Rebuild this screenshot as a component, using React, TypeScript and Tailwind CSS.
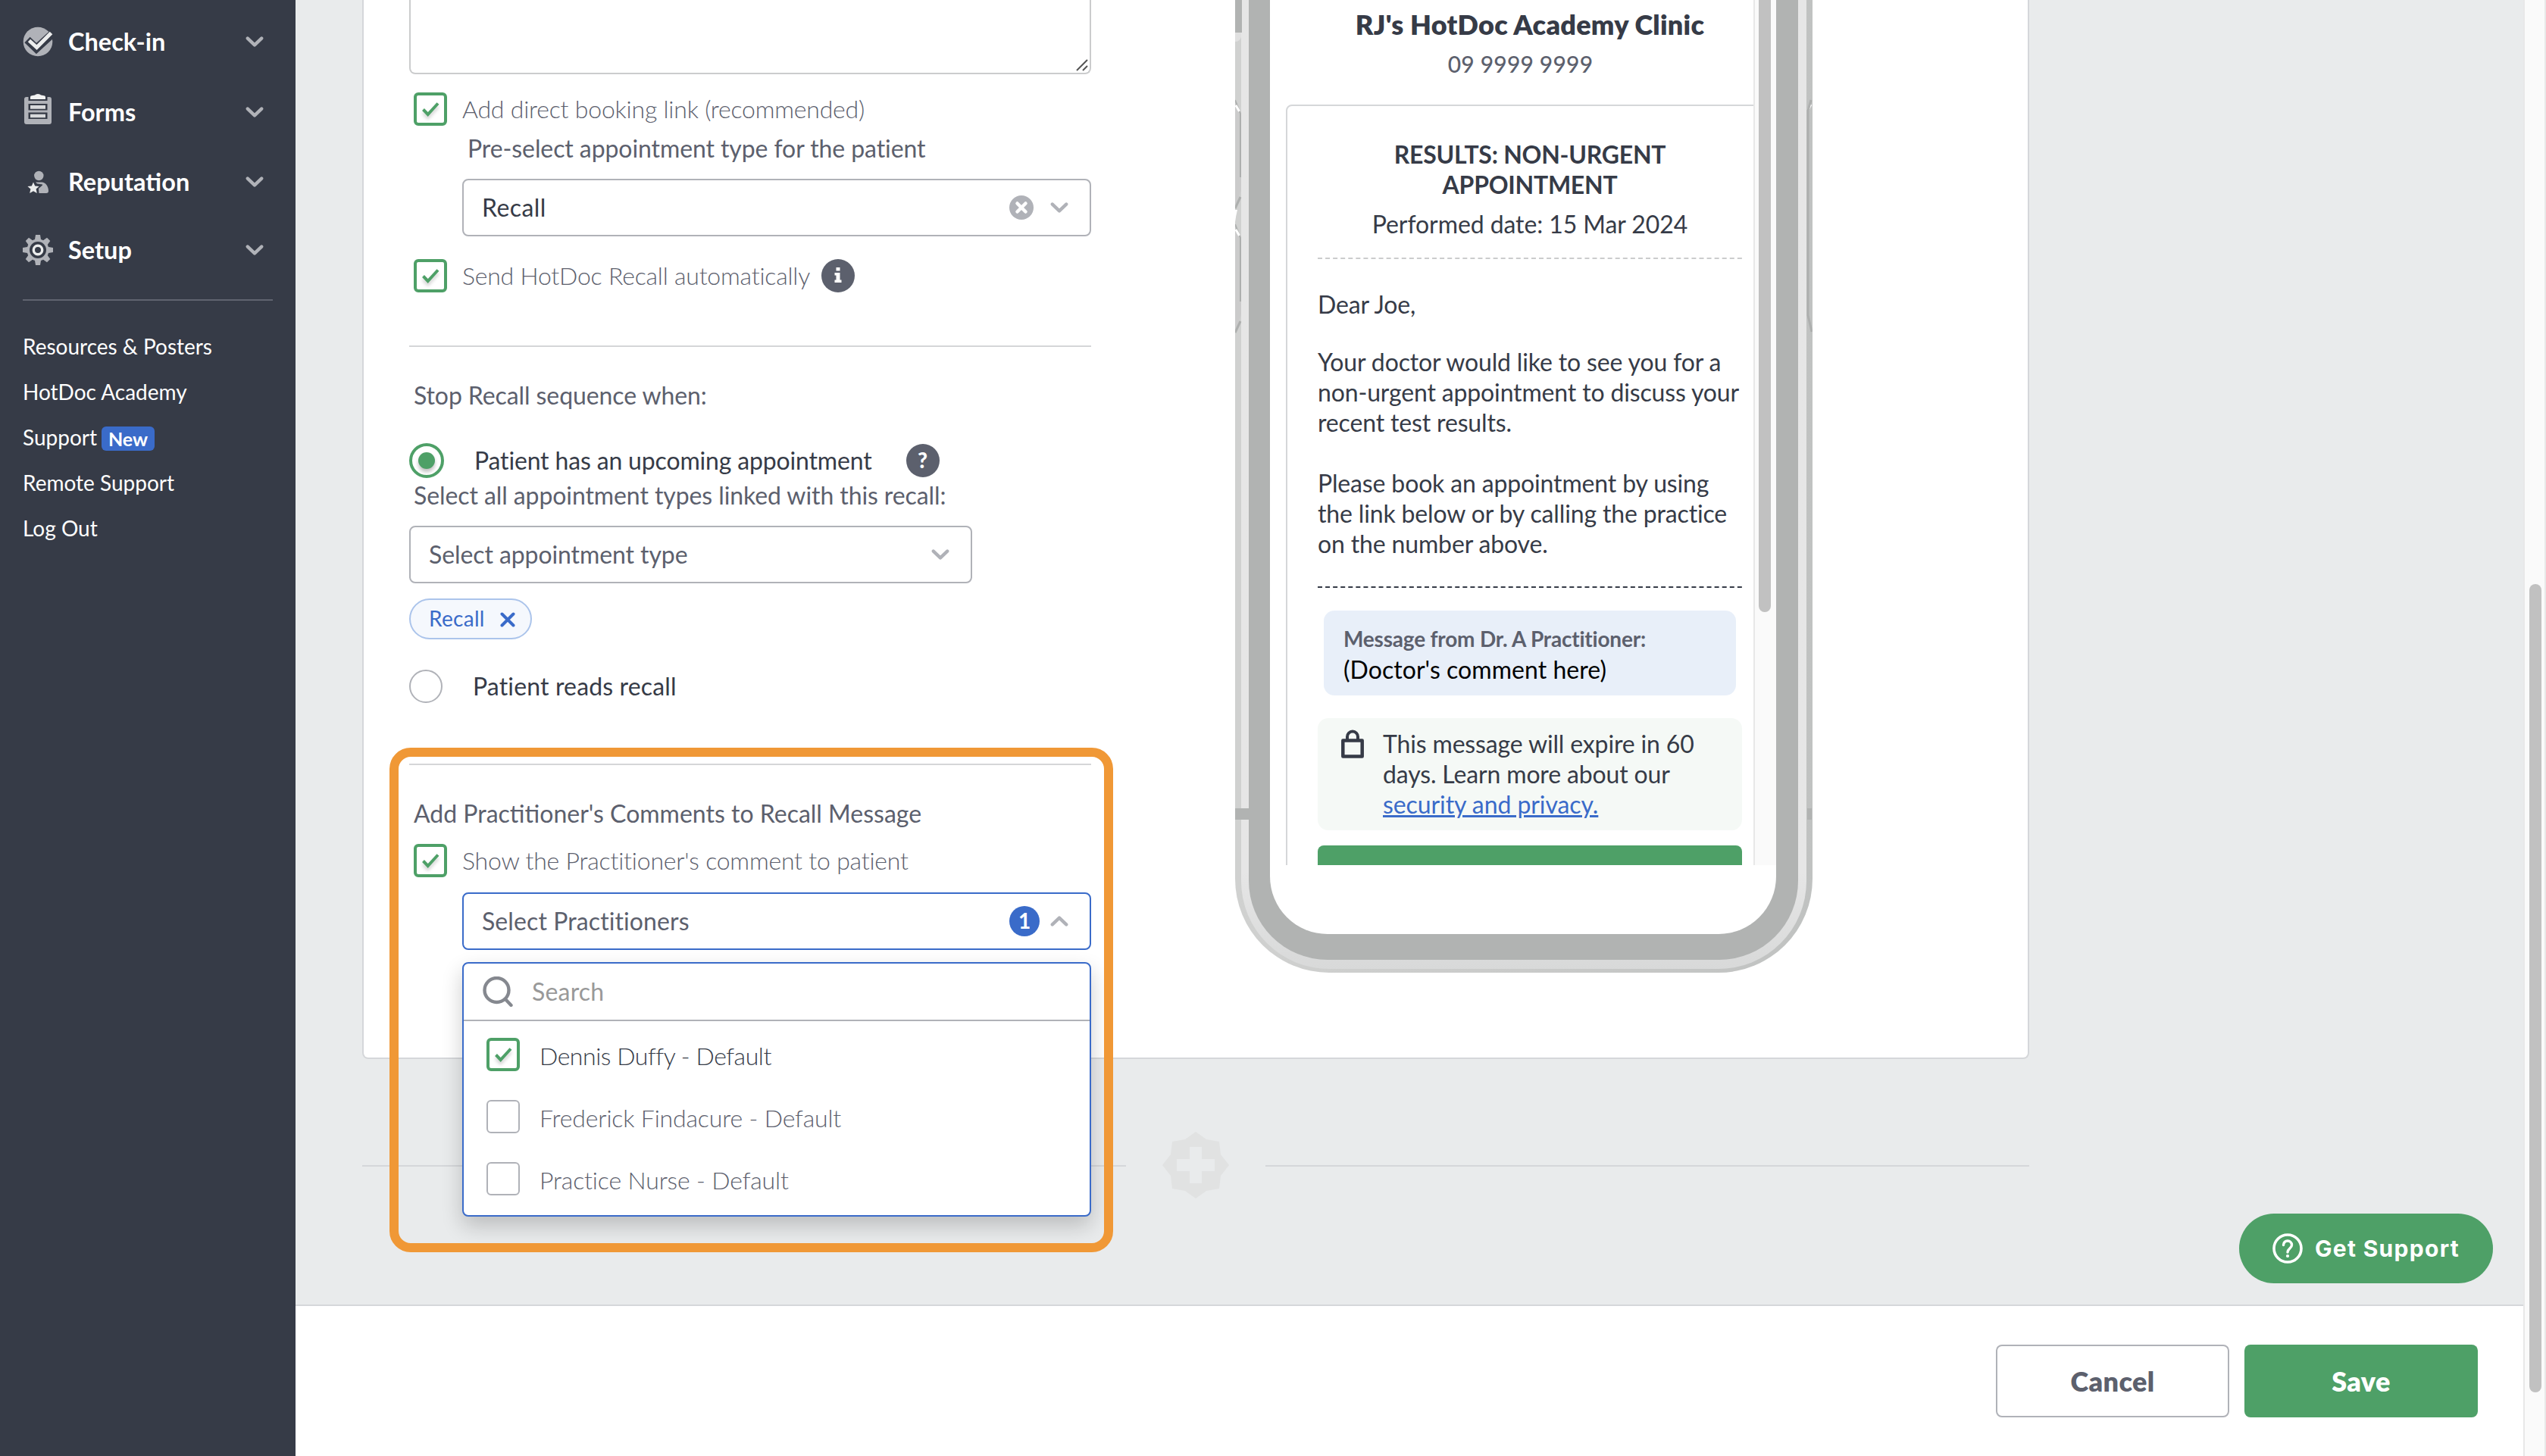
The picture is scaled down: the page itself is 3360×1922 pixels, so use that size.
import type { ReactNode } from "react";
import { clsx } from "clsx";

const links = ["Resources & Posters", "HotDoc Academy", "Support", "Remote Support", "Log Out"];

const practitioners = [
  { name: "Dennis Duffy - Default", checked: true },
  { name: "Frederick Findacure - Default", checked: false },
  { name: "Practice Nurse - Default", checked: false },
];

function Chevron({ up = false }: { up?: boolean }) {
  return (
    <svg viewBox="0 0 24 16" className={clsx("h-4 w-6 shrink-0", up && "rotate-180")}>
      <path d="M2.8 3.6 12 12.4l9.2-8.8" fill="none" stroke="#b0b2b8" strokeWidth="4.4" strokeLinecap="round" strokeLinejoin="round" />
    </svg>
  );
}

function CheckInIcon() {
  return (
    <svg viewBox="0 0 40 40" className="size-10">
      <circle cx="20" cy="20" r="19.3" fill="#b0b2b8" />
      <path d="M6 17.5 18 29 40 9" fill="none" stroke="#363b47" strokeWidth="10.5" />
      <path d="M8.5 18.5 18.5 27.500 37.500 8.500" fill="none" stroke="#eceded" strokeWidth="5" />
    </svg>
  );
}

function FormsIcon() {
  return (
    <svg viewBox="0 0 40 40" className="relative -top-1 size-10">
      <path d="M5 4h2.500v5h25V4H35q3 0 3 3v30q0 3-3 3H5q-3 0-3-3V7q0-3 3-3z" fill="#b0b2b8" />
      <path d="M7.500 13h25v8.500h-25zM7.500 24.500h25v8.500h-25z" fill="#363b47" />
      <path d="M10 15h20v4.800H10zM10 26.700h20v4.500H10z" fill="#d8d9db" />
      <path d="M10 7V4q0-1.500 2-1.800l4-.6Q17 0 20 0t4 1.600l4 .6q2 .3 2 1.800v3z" fill="#f2f2f2" />
    </svg>
  );
}

function ReputationIcon() {
  return (
    <svg viewBox="0 0 40 40" className="size-10">
      <circle cx="21.300" cy="12" r="6.200" fill="#b0b2b8" />
      <path d="M17 20.500h8c5 0 9 5.500 9 11.500 0 2-1 3-3 3H21.500l-.6-6 5.100-4.500v-1l-7-1z" fill="#b0b2b8" />
      <path d="m14 20.500 2.200 5 5.400.500-4 3.600 1.200 5.400-4.800-2.800L9.200 35l1.200-5.400-4-3.600 5.400-.5z" fill="#eceded" />
    </svg>
  );
}

function SetupIcon() {
  return (
    <svg viewBox="0 0 40 40" className="size-10">
      {[0, 45, 90, 135].map((angle) => (
        <path key={angle} d="M17 0h6l1 6v28l-1 6h-6l-1-6V6z" fill="#b0b2b8" transform={`rotate(${angle} 20 20)`} />
      ))}
      <circle cx="20" cy="20" r="14.500" fill="#b0b2b8" />
      <circle cx="20" cy="20" r="11" fill="#363b47" />
      <circle cx="20" cy="20" r="5.700" fill="none" stroke="#eceded" strokeWidth="3.400" />
    </svg>
  );
}

function NavItem({ label, icon, className }: { label: string; icon: ReactNode; className?: string }) {
  return (
    <div className={clsx("flex h-10 items-center", className)}>
      {icon}
      <span className="-mt-0.5 ml-5 flex-1 text-[32.500px] font-bold text-white">{label}</span>
      <Chevron />
    </div>
  );
}

function Sidebar() {
  return (
    <aside className="w-[390px] shrink-0 bg-[#363b47] px-[30px] pt-[35px]">
      <nav className="pr-3">
        <NavItem label="Check-in" icon={<CheckInIcon />} />
        <NavItem label="Forms" icon={<FormsIcon />} className="mt-[53px]" />
        <NavItem label="Reputation" icon={<ReputationIcon />} className="mt-[52px]" />
        <NavItem label="Setup" icon={<SetupIcon />} className="mt-[50px]" />
      </nav>
      <div className="mt-[45px] h-0.5 bg-[#60646f]" />
      <ul className="mt-[31px] text-[28px] text-white">
        {links.map((link) => (
          <li key={link} className="flex h-[60px] items-center">
            {link}
            {link === "Support" && (
              <span className="mt-0.5 ml-1.5 flex h-8 w-[70px] items-center justify-center rounded-md bg-[#3a6bc9] text-[25px] font-bold">New</span>
            )}
          </li>
        ))}
      </ul>
    </aside>
  );
}

function Checkbox({ checked = true }: { checked?: boolean }) {
  if (!checked) return <span className="size-11 shrink-0 rounded-md border-2 border-[#b0b2b8] bg-white" />;
  return (
    <span className="flex size-11 shrink-0 items-center justify-center rounded-md border-4 border-[#4ea067] bg-white">
      <svg viewBox="0 0 36 36" className="size-9 drop-shadow-[0_4px_2px_rgba(0,0,0,0.18)]">
        <path d="m8.500 18.500 6.200 6.500L28 10.500" fill="none" stroke="#4ea067" strokeWidth="4" />
      </svg>
    </span>
  );
}

function CheckRow({ label, className, children }: { label: string; className?: string; children?: ReactNode }) {
  return (
    <div className={clsx("ml-1.5 flex h-11 items-center", className)}>
      <Checkbox />
      <span className="ml-5 font-light tracking-[-0.21px] text-[#5c606d]">{label}</span>
      {children}
    </div>
  );
}

function RecallForm() {
  return (
    <div className="w-[900px] tracking-[-0.09px] text-[#5c606d]">
      <div className="flex h-[98px] items-end justify-end rounded-b-lg border-2 border-t-0 border-[#cbcccd]">
        <svg viewBox="0 0 16 16" className="m-0.5 size-4">
          <path d="M1 15 15 1M9 15l6-6" stroke="#555" strokeWidth="2" />
        </svg>
      </div>

      <CheckRow label="Add direct booking link (recommended)" className="mt-6" />
      <p className="mt-2.5 ml-[77px] h-10 leading-10">Pre-select appointment type for the patient</p>
      <div className="mt-5 ml-[70px] flex h-[76px] items-center rounded-lg border-2 border-[#b0b2b8] pr-7 pl-6 text-[#363b47]">
        <span className="flex-1 tracking-[0.4px]">Recall</span>
        <svg viewBox="0 0 32 32" className="mr-[22px] size-8">
          <circle cx="16" cy="16" r="16" fill="#b0b2b8" />
          <path d="m10.500 10.500 11 11m0-11-11 11" stroke="#fff" strokeWidth="4.500" strokeLinecap="round" />
        </svg>
        <Chevron />
      </div>
      <CheckRow label="Send HotDoc Recall automatically" className="mt-[30px]">
        <svg viewBox="0 0 44 44" className="ml-[15px] size-11">
          <circle cx="22" cy="22" r="22" fill="#5c606d" />
          <path d="M19.500 11h5v4.500h-5zM17.500 18h7v9.500h2V31h-9v-3.500h2v-6h-2z" fill="#fff" />
        </svg>
      </CheckRow>

      <div className="mt-[70px] h-0.5 bg-[#d5d6d8]" />
      <p className="mt-11 ml-1.5 h-10 leading-10">Stop Recall sequence when:</p>
      <div className="mt-[43px] flex h-[46px] items-center">
        <span className="flex size-[46px] items-center justify-center rounded-full border-4 border-[#4ea067]">
          <span className="size-[22px] rounded-full bg-[#4ea067] shadow-[0_4px_5px_rgba(0,0,0,0.25)]" />
        </span>
        <span className="ml-10 tracking-[-0.16px] text-[#363b47]">Patient has an upcoming appointment</span>
        <span className="ml-[45px] flex size-11 items-center justify-center rounded-full bg-[#5c606d] text-[28px] font-black text-white">?</span>
      </div>
      <p className="mt-[3px] ml-1.5 h-10 leading-10">Select all appointment types linked with this recall:</p>
      <div className="mt-5 flex h-[76px] w-[743px] items-center rounded-lg border-2 border-[#b0b2b8] pr-7 pl-6">
        <span className="flex-1">Select appointment type</span>
        <Chevron />
      </div>
      <div className="mt-5 flex h-[54px] w-[162px] items-center rounded-full border-2 border-[#abc4eb] bg-[#f5f8fd] pl-6 text-[28px] tracking-[0.3px] text-[#3a6bc9]">
        Recall
        <svg viewBox="0 0 20 20" className="mt-px ml-5 size-5">
          <path d="m2.500 2.500 15 15m0-15-15 15" stroke="#3a6bc9" strokeWidth="4" strokeLinecap="round" />
        </svg>
      </div>
      <div className="mt-10 flex h-11 items-center">
        <span className="size-11 rounded-full border-2 border-[#b0b2b8]" />
        <span className="ml-10 tracking-[0.15px] text-[#363b47]">Patient reads recall</span>
      </div>

      <section className="relative mt-20 h-[246px]">
        <div className="h-0.5 bg-[#d5d6d8]" />
        <p className="mt-11 ml-1.5 h-10 leading-10 tracking-normal">Add Practitioner's Comments to Recall Message</p>
        <CheckRow label="Show the Practitioner's comment to patient" className="mt-5" />
        <div className="relative mt-5 ml-[70px] flex h-[76px] items-center rounded-lg border-2 border-[#3a6bc9] pr-7 pl-6">
          <span className="flex-1 tracking-[0.1px]">Select Practitioners</span>
          <span className="mr-3.5 flex size-10 items-center justify-center rounded-full bg-[#3a6bc9] text-[28px] font-bold text-white">1</span>
          <Chevron up />
          <PractitionerMenu />
        </div>
        {/* highlight around the practitioner settings */}
        <div className="pointer-events-none absolute -top-[21px] -left-[26px] z-20 h-[666px] w-[955px] rounded-[28px] border-[12px] border-[#f09836]" />
      </section>
    </div>
  );
}

function PractitionerMenu() {
  return (
    <div className="absolute -left-0.5 top-[90px] z-10 h-[336px] w-[830px] rounded-lg border-2 border-[#3a6bc9] bg-white shadow-[0_12px_28px_rgba(0,0,0,0.2)]">
      <div className="flex h-[76px] items-center border-b-2 border-[#b0b2b8] pl-[25px]">
        <svg viewBox="0 0 40 40" className="size-10">
          <circle cx="18.500" cy="18" r="16" fill="none" stroke="#85888f" strokeWidth="4.400" />
          <path d="m30 30 7.500 8" stroke="#85888f" strokeWidth="4.400" strokeLinecap="round" />
        </svg>
        <span className="ml-[25px] tracking-[0.2px] text-[#999]">Search</span>
      </div>
      <ul className="pt-[22px] pl-[30px] tracking-[-0.16px]">
        {practitioners.map(({ name, checked }) => (
          <li key={name} className="mb-[38px] flex h-11 items-center">
            <Checkbox checked={checked} />
            <span
              className={clsx("mt-1 ml-[26px] font-light", checked ? "tracking-[-0.45px] text-[#363b47]" : "text-[#5c606d]")}
            >
              {name}
            </span>
          </li>
        ))}
      </ul>
    </div>
  );
}

// Volume, power and antenna details along the edges of the handset
function PhoneEdges() {
  return (
    <svg viewBox="0 0 762 1142" className="pointer-events-none absolute top-0 left-0 h-[1142px] w-[762px]">
      <path d="M0 0h9v43H0z" fill="#b1b3b2" />
      <path d="M0 43h8v6q-2 6-8 6z" fill="#e0e0e0" />
      {[0, 164].map((dy) => (
        <g key={dy} transform={`translate(0 ${dy})`}>
          <path d="M0 131 8 149v102L0 275z" fill="#cbcbcb" />
          <path d="M0 132 7 150v84" fill="none" stroke="#adafae" strokeWidth="2" />
          <path d="M1 139 5.500 147" stroke="#fff" strokeWidth="3" />
          <path d="m0 275 7-15" stroke="#adafae" strokeWidth="3" />
        </g>
      ))}
      <path d="M0 277h3q-2 8-3 16z" fill="#fff" />
      <path d="m760 138-4 7" stroke="#fff" strokeWidth="3" />
      <path d="m760 132-4 14v270l5 22" fill="none" stroke="#adafae" strokeWidth="3" />
      <path d="M0 1067h18v15H0zM755 1067h6v15h-6z" fill="#b1b3b2" />
    </svg>
  );
}

function PhonePreview() {
  return (
    <div className="relative h-[1284px] w-[762px] rounded-b-[124px] bg-linear-to-r from-[#d0d1d0] via-[#c9cac9] to-[#c0c2c1] pr-2 pb-[5px] pl-2">
      <div className="h-full rounded-b-[116px] bg-linear-to-b from-[#e6e6e6] from-90% to-[#d8d9d9] pr-[11px] pb-3 pl-2.5">
        <div className="h-full rounded-b-[104px] bg-[#b1b3b2] pr-[29px] pb-[34px] pl-7">
          <div className="h-full overflow-hidden rounded-b-[76px] bg-white">
            <div className="flex h-[1142px]">
              <div className="flex-1 overflow-hidden">
                <div className="ml-[21px] w-[644px] text-[#363b47]">
                  <h2 className="pt-2.5 text-center text-[36px] leading-[44px] font-extrabold tracking-[0.25px]">RJ's HotDoc Academy Clinic</h2>
                  <p className="mt-2.5 h-10 pr-[25px] text-center text-[30px] leading-10 font-medium tracking-[0.2px] text-[#5c606d]">09 9999 9999</p>
                  <article className="mt-[34px] h-[1100px] rounded-lg border-2 border-[#d5d7d9] px-10 tracking-[-0.15px] whitespace-nowrap">
                    <h3 className="mt-11 text-center leading-10 font-bold tracking-[-0.25px]">
                      RESULTS: NON-URGENT
                      <br />
                      APPOINTMENT
                    </h3>
                    <p className="mt-3 text-center leading-10 tracking-[-0.08px]">Performed date: 15 Mar 2024</p>
                    <DashedLine color="#cbcccd" className="mt-6" />
                    <p className="mt-10 leading-10">Dear Joe,</p>
                    <p className="mt-9 leading-10">
                      Your doctor would like to see you for a
                      <br />
                      non-urgent appointment to discuss your
                      <br />
                      recent test results.
                    </p>
                    <p className="mt-10 leading-10">
                      Please book an appointment by using
                      <br />
                      the link below or by calling the practice
                      <br />
                      on the number above.
                    </p>
                    <DashedLine color="#363b47" className="mt-9" />
                    <div className="mx-2 mt-[30px] h-28 rounded-[14px] bg-[#e8eff9] px-[26px] pt-[17px]">
                      <p className="text-[28px] leading-10 font-bold tracking-[-0.2px] text-[#5c606d]">Message from Dr. A Practitioner:</p>
                      <p className="mt-px leading-10 tracking-[0.05px] text-black">(Doctor's comment here)</p>
                    </div>
                    <div className="mt-[30px] flex h-[148px] rounded-[14px] bg-[#f5f9f6] pt-3.5 pl-[31px]">
                      <svg viewBox="0 0 30 38" className="mt-px h-[38px] w-[30px]">
                        <path d="M2.300 14.500h25.400v21H2.300z" fill="none" stroke="#363b47" strokeWidth="4.500" strokeLinejoin="round" />
                        <path d="M8 14V9.500a7 7 0 0 1 14 0V14" fill="none" stroke="#363b47" strokeWidth="4" />
                      </svg>
                      <p className="ml-[25px] leading-10">
                        This message will expire in 60
                        <br />
                        days. Learn more about our
                        <br />
                        <a className="tracking-[-0.08px] text-[#3a6bc9] underline">security and privacy.</a>
                      </p>
                    </div>
                    <div className="mt-5 h-20 rounded-lg bg-[#4ea067]" />
                  </article>
                </div>
              </div>
              <div className="w-[30px] border-l-2 border-[#e8e8e8] bg-[#fafafa]">
                <div className="ml-[5px] h-[808px] w-4 rounded-b-full bg-[#c1c1c1]" />
              </div>
            </div>
          </div>
        </div>
      </div>
      <PhoneEdges />
    </div>
  );
}

function DashedLine({ color, className }: { color: string; className?: string }) {
  return (
    <svg viewBox="0 0 560 2" preserveAspectRatio="none" className={clsx("h-0.5 w-full", className)}>
      <path d="M0 1h560" stroke={color} strokeWidth="2" strokeDasharray="6 4.070" />
    </svg>
  );
}

function AddStepDivider() {
  return (
    <div className="mt-24 ml-[88px] flex h-[88px] w-[2200px] items-center">
      <div className="mt-0.5 h-0.5 flex-1 bg-[#d5d7da]" />
      <svg viewBox="0 0 88 88" className="mx-12 size-[88px]">
        <path d="m44 0 14 10 17 3 2 17 11 14-11 14-2 17-17 3-14 10-14-10-17-3-2-17L0 44l11-14 2-17 17-3z" fill="#e1e2e2" />
        <path d="M36 20h16v16h17v16H52v16H36V52H19V36h17z" fill="#e9ebec" />
      </svg>
      <div className="mt-0.5 h-0.5 flex-1 bg-[#d5d7da]" />
    </div>
  );
}

export default function App() {
  return (
    <div className="flex h-[1922px] w-[3360px] overflow-hidden bg-white font-['Lato',sans-serif] text-[32px] leading-[1.2]">
      <Sidebar />
      <div className="relative flex flex-1 flex-col">
        <main className="h-[1724px] border-b-2 border-[#d5d7da] bg-[#e9ebec]">
          <div className="ml-[88px] flex h-[1398px] w-[2200px] rounded-b-lg border-2 border-t-0 border-[#d5d7da] bg-white pl-[60px]">
            <RecallForm />
            <div className="ml-[190px]">
              <PhonePreview />
            </div>
          </div>
          <AddStepDivider />
        </main>
        <footer className="flex flex-1 justify-end gap-5 pt-[51px] pr-[60px] text-[36px] font-extrabold tracking-[0.4px]">
          <button className="h-24 w-[308px] rounded-lg border-2 border-[#b0b2b8] pt-0.5 text-[#5c606d]">Cancel</button>
          <button className="h-24 w-[308px] rounded-lg bg-[#4ea067] pt-0.5 text-white">Save</button>
        </footer>
        <button className="absolute top-[1602px] right-10 flex h-[92px] w-[335px] items-center rounded-full bg-[#4ea067] pl-11 font-['Inter',sans-serif] text-[30px] font-bold tracking-[1.3px] whitespace-nowrap text-white">
          <svg viewBox="0 0 40 40" className="mr-4 size-10">
            <circle cx="20" cy="20" r="18" fill="none" stroke="#fff" strokeWidth="3.600" />
            <path d="M14.500 15.500c0-7.500 11-7 11 0 0 4.500-5.500 4.500-5.500 9.500" fill="none" stroke="#fff" strokeWidth="3.400" strokeLinecap="round" />
            <circle cx="20" cy="30" r="2.100" fill="#fff" />
          </svg>
          Get Support
        </button>
      </div>
      <div className="w-[30px] border-x-2 border-[#e8e8e8] bg-[#fafafa] pt-[771px]">
        <div className="ml-1.5 h-[1067px] w-4 rounded-full bg-[#c1c1c1]" />
      </div>
    </div>
  );
}
